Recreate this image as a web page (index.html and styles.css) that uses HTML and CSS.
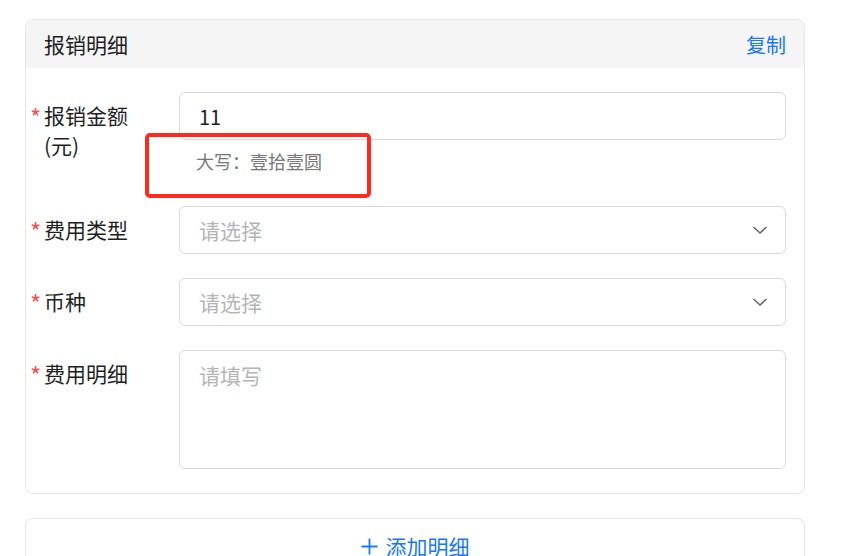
FILE: index.html
```html
<!DOCTYPE html>
<html lang="zh-CN">
<head>
<meta charset="utf-8">
<link rel="stylesheet" href="styles.css">
</head>
<body>
<div class="page">
  <section class="card">
    <header class="card-head">
      <span class="card-title">报销明细</span>
      <a class="card-action">复制</a>
    </header>
    <div class="card-body">
      <div class="row">
        <div class="label"><span class="star">*</span><span class="label-text">报销金额(元)</span></div>
        <div class="field">
          <div class="input"><span class="value">11</span></div>
          <div class="hint">大写：壹拾壹圆</div>
        </div>
      </div>
      <div class="row">
        <div class="label"><span class="star">*</span><span class="label-text">费用类型</span></div>
        <div class="field">
          <div class="input select"><span class="placeholder">请选择</span>
            <svg class="chev" width="16" height="10" viewBox="0 0 16 10"><path d="M1.5 2 L8 8 L14.5 2" fill="none" stroke="#666" stroke-width="1.6"/></svg>
          </div>
        </div>
      </div>
      <div class="row">
        <div class="label"><span class="star">*</span><span class="label-text">币种</span></div>
        <div class="field">
          <div class="input select"><span class="placeholder">请选择</span>
            <svg class="chev" width="16" height="10" viewBox="0 0 16 10"><path d="M1.5 2 L8 8 L14.5 2" fill="none" stroke="#666" stroke-width="1.6"/></svg>
          </div>
        </div>
      </div>
      <div class="row">
        <div class="label"><span class="star">*</span><span class="label-text">费用明细</span></div>
        <div class="field">
          <div class="textarea"><span class="placeholder">请填写</span></div>
        </div>
      </div>
    </div>
  </section>
  <div class="add-card">
    <svg class="plus" width="17" height="17" viewBox="0 0 17 17"><path d="M8.5 0.5 V16.5 M0.5 8.5 H16.5" stroke="#1677ff" stroke-width="1.8" fill="none"/></svg>
    <span>添加明细</span>
  </div>
  <div class="annotation"></div>
</div>
</body>
</html>
```

FILE: styles.css
```css
* { box-sizing: border-box; }
html, body { margin: 0; padding: 0; background: #fff; }
body {
  font-family: "Noto Sans CJK SC", "Noto Sans", sans-serif;
  color: #1f1f1f;
  overflow: hidden;
}
.page {
  position: relative;
  padding: 19px 44px 0 25px;
}
.card {
  width: 780px;
  border: 1px solid #e6e6e6;
  border-radius: 8px;
  overflow: hidden;
}
.card-head {
  height: 48px;
  background: #f5f5f5;
  display: flex;
  align-items: center;
  justify-content: space-between;
  padding: 0 18px;
  font-size: 21px;
}
.card-title { color: #1f1f1f; }
.card-action { color: #1677ff; font-size: 20px; }
.card-body {
  padding: 24px 18px 24px 4px;
  display: flex;
  flex-direction: column;
  gap: 24px;
}
.row {
  display: flex;
}
.label {
  width: 149px;
  flex: none;
  display: flex;
  align-items: flex-start;
  padding-top: 8px;
  font-size: 21px;
  line-height: 30px;
  color: #1f1f1f;
}
.star {
  color: #ff4d4f;
  width: 14px;
  flex: none;
  font-size: 24px;
  line-height: 34px;
}
.label-text { width: 100px; }
.field { flex: 1; }
.input {
  height: 48px;
  border: 1px solid #d9d9d9;
  border-radius: 6px;
  display: flex;
  align-items: center;
  justify-content: space-between;
  padding: 0 17px 0 19px;
  font-size: 20px;
}
.value { color: #1f1f1f; }
.placeholder { color: #b5b5b5; font-size: 21px; }
.chev { display: block; }
.hint {
  height: 42px;
  line-height: 42px;
  padding-left: 17px;
  font-size: 18px;
  color: #777;
}
.textarea {
  height: 119px;
  border: 1px solid #d9d9d9;
  border-radius: 6px;
  padding: 9px 19px;
  line-height: 30px;
}
.add-card {
  margin-top: 24px;
  width: 780px;
  height: 56px;
  border: 1px solid #e6e6e6;
  border-radius: 8px;
  display: flex;
  align-items: center;
  justify-content: center;
  gap: 8px;
  padding-bottom: 0;
  font-size: 21px;
  line-height: 30px;
  color: #1677ff;
}
.plus { display: block; flex: none; }
.annotation {
  position: absolute;
  left: 145px;
  top: 133px;
  width: 226px;
  height: 65px;
  border: 4px solid #ff2a1f;
  border-radius: 5px;
}
```
